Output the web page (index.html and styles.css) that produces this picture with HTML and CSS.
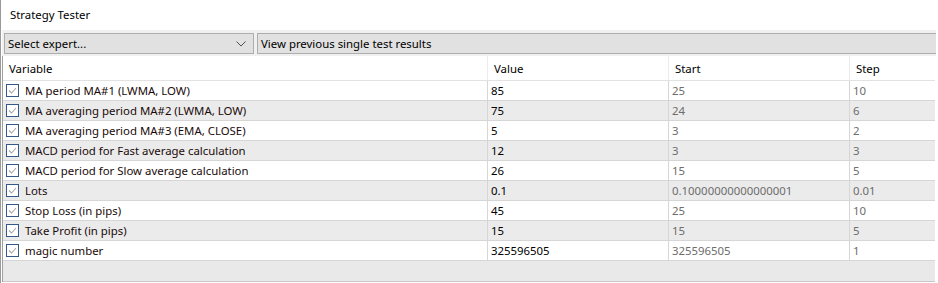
FILE: index.html
```html
<!DOCTYPE html>
<html>
<head>
<meta charset="utf-8">
<link rel="stylesheet" href="styles.css">
</head>
<body>
<div class="page">
  <div class="title">Strategy Tester</div>
  <div class="toolbar">
    <div class="combo">
      <span>Select expert...</span>
      <svg class="chev" width="10" height="6" viewBox="0 0 10 6"><path d="M0.5 0.5 L5 5 L9.5 0.5" fill="none" stroke="#505050" stroke-width="1"/></svg>
    </div>
    <div class="btn">View previous single test results</div>
  </div>
  <div class="grid">
    <div class="row head">
      <div class="c c1">Variable</div>
      <div class="c c2">Value</div>
      <div class="c c3">Start</div>
      <div class="c c4">Step</div>
    </div>
    <div class="row">
      <div class="c c1"><span class="cb"><svg width="11" height="11" viewBox="0 0 11 11"><path d="M2 5.5 L4.5 8 L9 3" fill="none" stroke="#a8a8a8" stroke-width="1.1"/></svg></span>MA period MA#1 (LWMA, LOW)</div>
      <div class="c c2">85</div><div class="c c3">25</div><div class="c c4">10</div>
    </div>
    <div class="row alt">
      <div class="c c1"><span class="cb"><svg width="11" height="11" viewBox="0 0 11 11"><path d="M2 5.5 L4.5 8 L9 3" fill="none" stroke="#a8a8a8" stroke-width="1.1"/></svg></span>MA averaging period MA#2 (LWMA, LOW)</div>
      <div class="c c2">75</div><div class="c c3">24</div><div class="c c4">6</div>
    </div>
    <div class="row">
      <div class="c c1"><span class="cb"><svg width="11" height="11" viewBox="0 0 11 11"><path d="M2 5.5 L4.5 8 L9 3" fill="none" stroke="#a8a8a8" stroke-width="1.1"/></svg></span>MA averaging period MA#3 (EMA, CLOSE)</div>
      <div class="c c2">5</div><div class="c c3">3</div><div class="c c4">2</div>
    </div>
    <div class="row alt">
      <div class="c c1"><span class="cb"><svg width="11" height="11" viewBox="0 0 11 11"><path d="M2 5.5 L4.5 8 L9 3" fill="none" stroke="#a8a8a8" stroke-width="1.1"/></svg></span>MACD period for Fast average calculation</div>
      <div class="c c2">12</div><div class="c c3">3</div><div class="c c4">3</div>
    </div>
    <div class="row">
      <div class="c c1"><span class="cb"><svg width="11" height="11" viewBox="0 0 11 11"><path d="M2 5.5 L4.5 8 L9 3" fill="none" stroke="#a8a8a8" stroke-width="1.1"/></svg></span>MACD period for Slow average calculation</div>
      <div class="c c2">26</div><div class="c c3">15</div><div class="c c4">5</div>
    </div>
    <div class="row alt">
      <div class="c c1"><span class="cb"><svg width="11" height="11" viewBox="0 0 11 11"><path d="M2 5.5 L4.5 8 L9 3" fill="none" stroke="#a8a8a8" stroke-width="1.1"/></svg></span>Lots</div>
      <div class="c c2">0.1</div><div class="c c3">0.10000000000000001</div><div class="c c4">0.01</div>
    </div>
    <div class="row">
      <div class="c c1"><span class="cb"><svg width="11" height="11" viewBox="0 0 11 11"><path d="M2 5.5 L4.5 8 L9 3" fill="none" stroke="#a8a8a8" stroke-width="1.1"/></svg></span>Stop Loss (in pips)</div>
      <div class="c c2">45</div><div class="c c3">25</div><div class="c c4">10</div>
    </div>
    <div class="row alt">
      <div class="c c1"><span class="cb"><svg width="11" height="11" viewBox="0 0 11 11"><path d="M2 5.5 L4.5 8 L9 3" fill="none" stroke="#a8a8a8" stroke-width="1.1"/></svg></span>Take Profit (in pips)</div>
      <div class="c c2">15</div><div class="c c3">15</div><div class="c c4">5</div>
    </div>
    <div class="row">
      <div class="c c1"><span class="cb"><svg width="11" height="11" viewBox="0 0 11 11"><path d="M2 5.5 L4.5 8 L9 3" fill="none" stroke="#a8a8a8" stroke-width="1.1"/></svg></span>magic number</div>
      <div class="c c2">325596505</div><div class="c c3">325596505</div><div class="c c4">1</div>
    </div>
    <div class="filler"></div>
  </div>
</div>
</body>
</html>
```
FILE: styles.css
```css
html, body {
  margin: 0;
  padding: 0;
  background: #ffffff;
}
body {
  font-family: "Noto Sans", "DejaVu Sans", sans-serif;
  font-size: 11.4px;
  color: #000000;
  width: 938px;
  height: 283px;
  overflow: hidden;
}
.page {
  border-left: 1px solid #9a9a9a;
  height: 283px;
  box-sizing: border-box;
}
.title {
  height: 30px;
  line-height: 30px;
  padding-left: 9px;
  color: #000;
}
.toolbar {
  display: flex;
  gap: 3px;
  width: 934px;
  margin-left: 1px;
  background: #f0f0f0;
  padding: 3px 0 2px 2px;
  box-sizing: border-box;
  height: 26px;
}
.combo {
  width: 250px;
  height: 21px;
  box-sizing: border-box;
  border: 1px solid #adadad;
  background: #e1e1e1;
  display: flex;
  align-items: center;
  justify-content: space-between;
  padding: 0 7px 0 3px;
}
.chev {
  display: block;
}
.btn {
  flex: 1;
  height: 21px;
  box-sizing: border-box;
  border: 1px solid #adadad;
  border-right: none;
  background: #e1e1e1;
  display: flex;
  align-items: center;
  padding-left: 3px;
}
.grid {
  margin-left: 1px;
  width: 933px;
  border-left: 1px solid #a0a0a0;
  box-sizing: border-box;
}
.row {
  display: grid;
  grid-template-columns: 484px 181px 181px 86px;
  height: 19px;
  border-bottom: 1px solid #d6d6d6;
  box-sizing: content-box;
  background: #ffffff;
}
.row.alt {
  background: #ebebeb;
}
.row.head {
  height: 24px;
  border-bottom: 1px solid #e2e2e2;
}
.c {
  display: flex;
  align-items: center;
  padding-left: 3px;
  white-space: nowrap;
  overflow: hidden;
  border-left: 1px solid #d6d6d6;
}
.c1 {
  border-left: none;
  padding-left: 3px;
  color: #1a0a0a;
}
.head .c {
  padding-left: 6px;
  border-left-color: #ececec;
  color: #000;
}
.head .c1 {
  padding-left: 6px;
}
.c3, .c4 {
  color: #6d6d6d;
}
.head .c3, .head .c4 {
  color: #000;
}
.cb {
  width: 13px;
  height: 13px;
  box-sizing: border-box;
  border: 1px solid #35588a;
  background: #ffffff;
  margin-right: 6px;
  display: flex;
  align-items: center;
  justify-content: center;
}
.cb svg {
  display: block;
}
.filler {
  height: 20px;
  background: #e9e9e9;
  border-bottom: 1px solid #c8c8c8;
}
```
